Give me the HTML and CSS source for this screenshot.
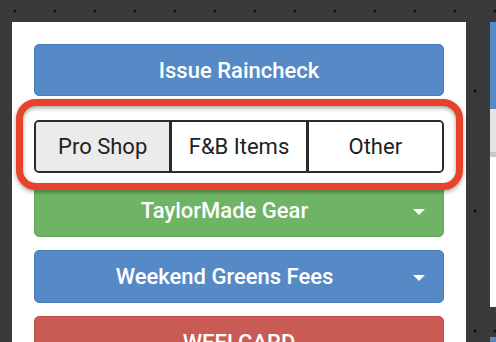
FILE: index.html
```html
<!DOCTYPE html>
<html lang="en">
<head>
    <meta charset="UTF-8">
    <meta name="viewport" content="width=device-width, initial-scale=1.0">
    <title>Raincheck Categories</title>
    <link rel="stylesheet" href="styles.css">
</head>
<body>

    <div class="stage">
        <!-- Main category panel -->
        <div class="panel">
            <button class="btn btn-blue">Issue Raincheck</button>

            <div class="segments">
                <div class="segment active">Pro Shop</div>
                <div class="segment">F&amp;B Items</div>
                <div class="segment">Other</div>
            </div>

            <button class="btn btn-green dropdown">TaylorMade Gear<span class="caret"></span></button>
            <button class="btn btn-blue dropdown">Weekend Greens Fees<span class="caret"></span></button>
            <button class="btn btn-red">WEELCARD</button>

            <!-- Annotation ring around the segment control -->
            <div class="highlight"></div>
        </div>

        <div class="gutter"></div>

        <!-- Next panel, cut off at the window edge -->
        <div class="side">
            <div class="side-card">
                <div class="side-head"></div>
                <div class="side-bar"></div>
            </div>
            <div class="side-card second">
                <div class="side-head"></div>
            </div>
        </div>
    </div>

</body>
</html>
```

FILE: styles.css
```css
* {
    margin: 0;
    padding: 0;
    box-sizing: border-box;
}

body {
    background-color: #3a3a3a;
    background-image: radial-gradient(circle, #111 0, #111 1px, transparent 2px);
    background-size: 40px 40px;
    background-position: -5px -9px;
    font-family: Roboto, "Liberation Sans", Arial, sans-serif;
    width: 496px;
    height: 342px;
    overflow: hidden;
}

.stage {
    display: flex;
    padding: 22px 0 0 12px;
    height: 342px;
}

.panel {
    position: relative;
    width: 454px;
    flex-shrink: 0;
    background: #fff;
    padding: 22px 22px 0 22px;
    display: flex;
    flex-direction: column;
}

.btn {
    position: relative;
    display: block;
    width: 100%;
    height: 53px;
    border-radius: 5px;
    border: 1px solid transparent;
    color: #fff;
    font-family: Roboto, "Liberation Sans", Arial, sans-serif;
    font-size: 22px;
    font-weight: 500;
    text-align: center;
    margin-bottom: 13px;
    flex-shrink: 0;
}

.btn:first-child {
    height: 52px;
    margin-bottom: 24px;
}

.btn-blue {
    background: #568ac6;
    border-color: #4a7db9;
}

.btn-green {
    background: #6eb464;
    border-color: #63a85a;
}

.btn-red {
    background: #c95b55;
    border-color: #bd4f49;
}

.dropdown {
    padding-right: 29px;
}

.caret {
    position: absolute;
    right: 18px;
    top: 50%;
    margin-top: -2px;
    width: 0;
    height: 0;
    border-left: 6px solid transparent;
    border-right: 6px solid transparent;
    border-top: 6px solid #fff;
}

.segments {
    display: flex;
    height: 53px;
    border: 2px solid #2b2b2b;
    border-radius: 5px;
    overflow: hidden;
    margin-bottom: 11px;
    flex-shrink: 0;
}

.segment {
    flex: 1;
    display: flex;
    align-items: center;
    justify-content: center;
    font-size: 22px;
    color: #222;
    background: #fff;
}

.segment + .segment {
    border-left: 3px solid #2b2b2b;
}

.segment.active {
    background: #ebebeb;
}

.highlight {
    position: absolute;
    left: 4px;
    top: 77px;
    width: 447px;
    height: 91px;
    border: 7px solid #e8422a;
    border-radius: 20px;
    filter: drop-shadow(0 2px 2px rgba(0, 0, 0, 0.35));
}

.gutter {
    width: 24px;
    flex-shrink: 0;
    background-color: #3a3a3a;
    background-image: radial-gradient(circle, #111 0, #111 1px, transparent 2px);
    background-size: 24px 120px;
    background-position: -3px 9px;
}

.side {
    flex: 1;
    display: flex;
    flex-direction: column;
    gap: 30px;
}

.side-card {
    height: 285px;
    background: #fff;
    flex-shrink: 0;
}

.side-head {
    height: 87px;
    background: #568ac6;
}

.side-bar {
    height: 48px;
    background: #e4e4e4;
    border-bottom: 5px solid #c8c8c8;
}

.side-card.second {
    height: 60px;
}
```
